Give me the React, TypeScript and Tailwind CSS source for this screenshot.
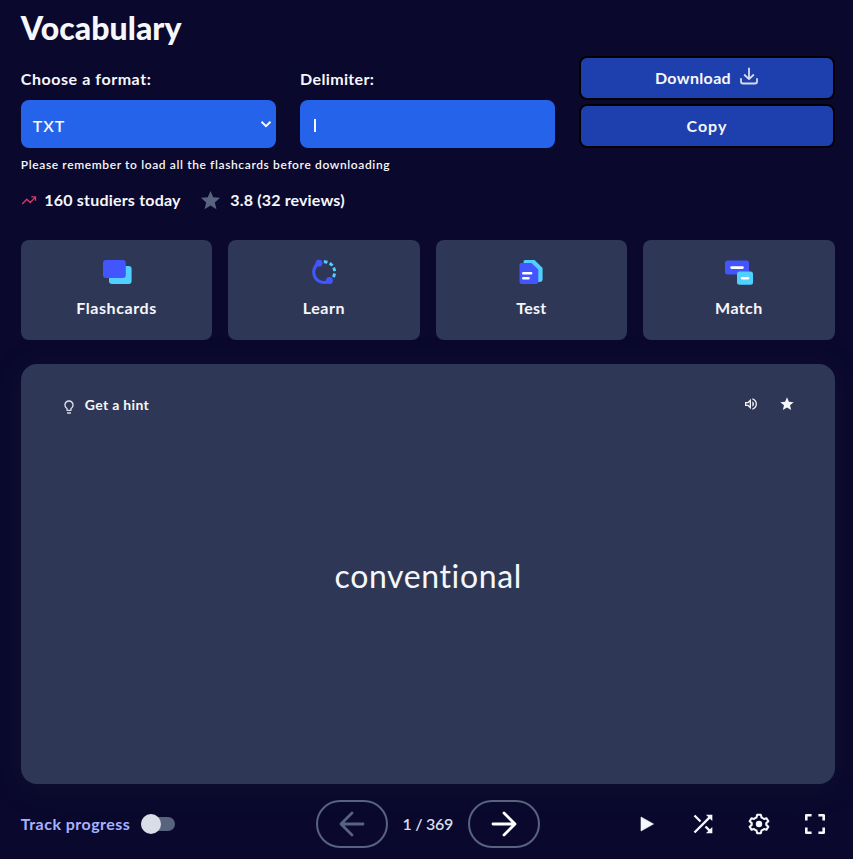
import type { ReactNode } from "react";
import { MdShuffle, MdStar, MdOutlineLightbulb, MdOutlineVolumeUp } from "react-icons/md";

function FlashcardsIcon() {
  return (
    <svg width="32" height="32" viewBox="0 0 32 32">
      <rect x="8" y="10" width="22.6" height="18" rx="3" fill="#51cfff" />
      <rect x="2" y="4" width="22.8" height="18" rx="3" fill="#4255ff" />
    </svg>
  );
}

function LearnIcon() {
  return (
    <svg width="32" height="32" viewBox="0 0 32 32" fill="none">
      <path d="M11 7A10.4 10.4 0 0 0 21.2 25.2" stroke="#4255ff" strokeWidth="3" />
      <circle cx="11" cy="7.2" r="3.4" fill="#4255ff" />
      <circle cx="21.5" cy="24.5" r="3.4" fill="#4255ff" />
      <path d="M15.8 5.8A10.3 10.3 0 0 1 25.2 21.4" stroke="#51cfff" strokeWidth="2.9" strokeDasharray="3.7 2.3" />
    </svg>
  );
}

function TestIcon() {
  return (
    <svg width="32" height="32" viewBox="0 0 32 32">
      <path d="M10 4H19.5L27.6 12V23Q27.6 26 24.6 26H10Q8.5 26 8.5 24V6Q8.5 4 10 4Z" fill="#51cfff" />
      <path d="M6 7H16.5L23.3 13.5V26Q23.3 28 21.3 28H6.5Q4.5 28 4.5 26V9Q4.5 7 6 7Z" fill="#4255ff" />
      <path d="M8.2 17.3H16.2M8.2 22.2H13.6" stroke="white" strokeWidth="2.4" strokeLinecap="round" />
    </svg>
  );
}

function MatchIcon() {
  return (
    <svg width="32" height="32" viewBox="0 0 32 32">
      <rect x="2" y="4.4" width="24" height="14" rx="2.5" fill="#4255ff" />
      <rect x="14" y="15.4" width="16" height="13.4" rx="2.5" fill="#51cfff" />
      <path d="M8.5 11.6H19.5M19 22.3H25" stroke="white" strokeWidth="2.6" strokeLinecap="round" />
    </svg>
  );
}

function Tile({ icon, children }: { icon: ReactNode; children: ReactNode }) {
  return (
    <button className="flex h-[100px] flex-col items-center rounded-lg bg-[#2e3856] pt-4 text-base leading-6 font-bold">
      {icon}
      <span className="mt-2">{children}</span>
    </button>
  );
}

export default function App() {
  return (
    <main className="h-[859px] w-[853px] overflow-hidden bg-[#0a092d] pr-[18.4px] pl-[20.8px] font-['Lato',sans-serif] text-[#f6f7fb]">
      <h1 className="h-[56px] pt-2 text-[32px] leading-10 font-black">
        <span className="tracking-[0.05px]">Vocabulary</span>
      </h1>

      <section className="grid h-[92px] grid-cols-3 gap-6">
        <div className="pt-[11px]">
          <label className="block h-[33px] text-base leading-6 font-bold">
            <span className="tracking-[0.56px]">Choose a format:</span>
          </label>
          <div className="flex h-12 items-center justify-between rounded-lg bg-[#2563eb] pr-[3px] pl-3 text-base">
            <span className="pt-[3px] font-semibold tracking-[0.9px]">TXT</span>
            <svg width="14" height="14" viewBox="0 0 14 14" fill="none">
              <path d="M2.5 4.8L7 9.2L11.5 4.8" stroke="currentColor" strokeWidth="2" />
            </svg>
          </div>
        </div>
        <div className="pt-[11px]">
          <label className="block h-[33px] text-base leading-6 font-bold">
            <span className="tracking-[0.36px]">Delimiter:</span>
          </label>
          <div className="flex h-12 items-center rounded-lg bg-[#2563eb] pl-[14px]">
            <span className="mt-[3px] h-[13px] w-[2px] overflow-hidden bg-[#f6f7fb] text-[10px] text-transparent">|</span>
          </div>
        </div>
        <div className="flex flex-col gap-1">
          <button className="flex h-11 items-center justify-center gap-2 rounded-lg border-2 border-black bg-[#1e40af] text-base font-bold">
            <span className="tracking-[0.35px]">Download</span>
            <svg className="-mt-1" width="20" height="20" viewBox="0 0 20 20" fill="none" stroke="#d9dde8" strokeWidth="1.8" strokeLinecap="round" strokeLinejoin="round">
              <path d="M10 2.5V13M5.6 9L10 13.2L14.4 9M2 12.8V15.5Q2 17.5 4 17.5H16Q18 17.5 18 15.5V12.8" />
            </svg>
          </button>
          <button className="h-11 rounded-lg border-2 border-black bg-[#1e40af] text-base font-bold">
            <span className="tracking-[1px]">Copy</span>
          </button>
        </div>
      </section>

      <p className="h-[40px] pt-2 text-xs leading-[18px] font-semibold">
        <span className="tracking-[0.62px]">Please remember to load all the flashcards before downloading</span>
      </p>

      <div className="flex h-[52px] items-start text-base leading-6 font-bold">
        <svg className="mt-1" width="16" height="16" viewBox="0 0 16 16" fill="none" stroke="#db3664" strokeWidth="1.35">
          <path d="M1.2 12L5.8 7.3L9.2 10.5L14.2 5.4M10.3 4.8H14.5V8.8" />
        </svg>
        <span className="ml-[7.5px] tracking-[0.2px]">160 studiers today</span>
        <MdStar className="mt-px ml-[18.7px]" size={23} color="#586380" />
        <span className="ml-2 tracking-[0.15px]">3.8 (32 reviews)</span>
      </div>

      <nav className="grid grid-cols-4 gap-4">
        <Tile icon={<FlashcardsIcon />}><span className="tracking-[0.6px]">Flashcards</span></Tile>
        <Tile icon={<LearnIcon />}><span className="tracking-[0.6px]">Learn</span></Tile>
        <Tile icon={<TestIcon />}><span className="tracking-[0.3px]">Test</span></Tile>
        <Tile icon={<MatchIcon />}><span className="tracking-[0.4px]">Match</span></Tile>
      </nav>

      <section className="mt-6 flex h-[420px] flex-col rounded-2xl bg-[#2e3856] shadow-[0_4px_32px_#282e3e33]">
        <header className="flex h-[80px] items-center justify-between pr-10 pl-10">
          <div className="flex items-center text-sm font-bold">
            <MdOutlineLightbulb className="mt-[5px]" size={16} color="#d9dde8" />
            <span className="mt-px ml-2 tracking-[0.32px]">Get a hint</span>
          </div>
          <div className="flex items-center gap-5">
            <MdOutlineVolumeUp size={16} color="#f0f2f8" />
            <MdStar size={16} />
          </div>
        </header>
        <div className="flex flex-1 items-center justify-center pb-[77px] text-[32px]">
          <span className="ml-px tracking-[0.62px]">conventional</span>
        </div>
      </section>

      <footer className="mt-4 grid h-12 grid-cols-3 items-center">
        <div className="flex items-center text-base font-bold text-[#a8b1ff]">
          <span className="tracking-[0.48px]">Track progress</span>
          <span className="ml-[10.5px] flex h-[14px] w-[34px] items-center rounded-full bg-[#586380]">
            <span className="h-5 w-5 shrink-0 rounded-full bg-[#d9dde8]" />
          </span>
        </div>
        <div className="flex items-center justify-center text-base font-semibold text-[#d9dde8]">
          <button className="flex h-12 w-[72px] shrink-0 items-center justify-center rounded-full border-2 border-[#586380] text-[#586380]">
            <svg width="32" height="32" viewBox="0 0 32 32" fill="none" stroke="currentColor" strokeWidth="2.8" strokeLinecap="round" strokeLinejoin="round">
              <path d="M27 16H5M16 5L5 16L16 27" />
            </svg>
          </button>
          <span className="w-20 text-center tracking-[-0.3px] whitespace-nowrap">1 / 369</span>
          <button className="flex h-12 w-[72px] shrink-0 items-center justify-center rounded-full border-2 border-[#586380] text-white">
            <svg width="32" height="32" viewBox="0 0 32 32" fill="none" stroke="currentColor" strokeWidth="2.8" strokeLinecap="round" strokeLinejoin="round">
              <path d="M5 16H27M16 5L27 16L16 27" />
            </svg>
          </button>
        </div>
        <div className="flex items-center justify-end gap-7 pr-[5.6px]">
          <svg width="28" height="28" viewBox="0 0 28 28">
            <path d="M8 7L20.5 14L8 21Z" fill="currentColor" stroke="currentColor" strokeWidth="0.6" strokeLinejoin="round" />
          </svg>
          <MdShuffle size={28} />
          <svg width="28" height="28" viewBox="0 0 28 28" fill="none">
            <path d="M12.2 4.8H15.8L16.6 7.6Q18 8.1 19.1 9L21.5 8.2L23.3 11.3L21.3 13.1V14.9L23.3 16.7L21.5 19.8L19.1 19Q18 19.9 16.6 20.4L15.8 23.2H12.2L11.4 20.4Q10 19.9 8.9 19L6.5 19.8L4.7 16.7L6.7 14.9V13.1L4.7 11.3L6.5 8.2L8.9 9Q10 8.1 11.4 7.6Z" stroke="currentColor" strokeWidth="2.1" strokeLinejoin="round" />
            <circle cx="14" cy="14" r="3.2" fill="currentColor" />
          </svg>
          <svg width="28" height="28" viewBox="0 0 28 28" fill="none" stroke="currentColor" strokeWidth="2.6">
            <path d="M5.3 10.6V5.3H10.6M17.4 5.3H22.7V10.6M22.7 17.4V22.7H17.4M10.6 22.7H5.3V17.4" strokeLinejoin="round" />
          </svg>
        </div>
      </footer>
    </main>
  );
}
